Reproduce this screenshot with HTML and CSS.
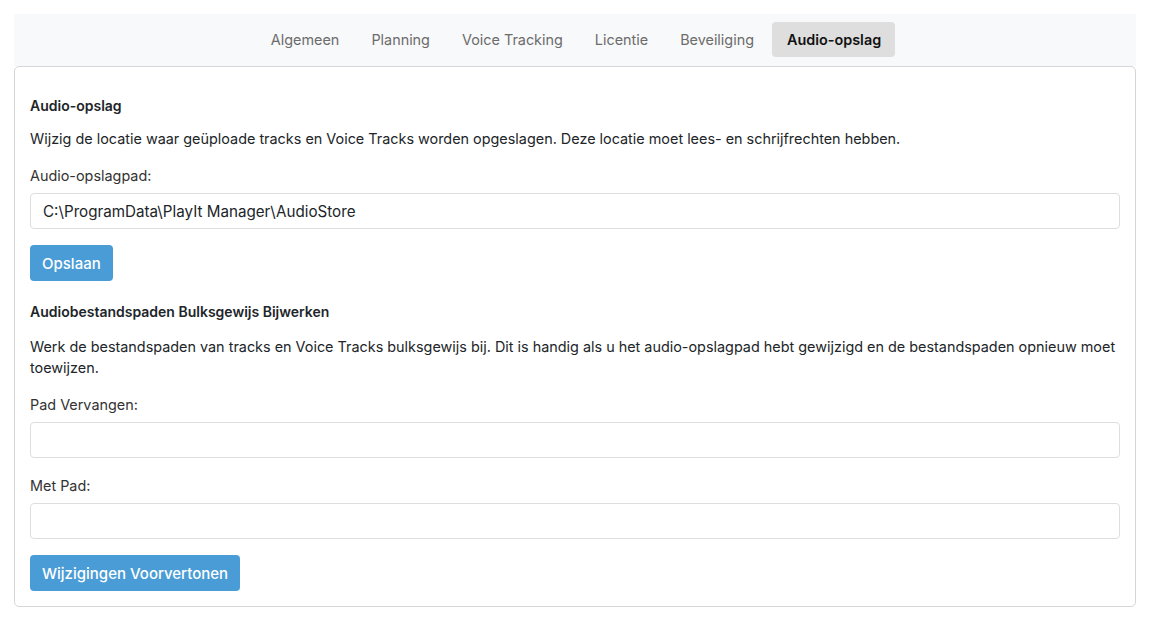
FILE: index.html
```html
<!DOCTYPE html>
<html lang="nl">

<head>
    <meta charset="UTF-8">
    <meta name="viewport" content="width=device-width, initial-scale=1.0">
    <title>Instellingen - Audio-opslag</title>
    <link rel="stylesheet" href="styles.css">
</head>

<body>
    <div class="settings">
        <nav class="tabs">
            <a class="tab" href="#">Algemeen</a>
            <a class="tab" href="#">Planning</a>
            <a class="tab" href="#">Voice Tracking</a>
            <a class="tab" href="#">Licentie</a>
            <a class="tab" href="#">Beveiliging</a>
            <a class="tab active" href="#">Audio-opslag</a>
        </nav>

        <div class="panel">
            <h3 class="first">Audio-opslag</h3>
            <p>Wijzig de locatie waar geüploade tracks en Voice Tracks worden opgeslagen. Deze locatie moet lees- en schrijfrechten hebben.</p>
            <label for="store-path">Audio-opslagpad:</label>
            <input type="text" id="store-path" value="C:\ProgramData\PlayIt Manager\AudioStore">
            <button class="btn">Opslaan</button>

            <h3>Audiobestandspaden Bulksgewijs Bijwerken</h3>
            <p>Werk de bestandspaden van tracks en Voice Tracks bulksgewijs bij. Dit is handig als u het audio-opslagpad hebt gewijzigd en de bestandspaden opnieuw moet toewijzen.</p>
            <label for="replace-path">Pad Vervangen:</label>
            <input type="text" id="replace-path">
            <label for="with-path">Met Pad:</label>
            <input type="text" id="with-path">
            <button class="btn">Wijzigingen Voorvertonen</button>
        </div>
    </div>
</body>

</html>
```

FILE: styles.css
```css
body {
    font-family: Inter, 'Noto Sans', sans-serif;
    font-size: 14.4px;
    margin: 0;
    padding: 14px;
    background: #fff;
    color: #212529;
}

.tabs {
    display: flex;
    justify-content: center;
    background-color: #f8f9fa;
    padding: 8px 0 9px;
}

.tab {
    padding: 9px 16px;
    font-size: 14.4px;
    line-height: 17px;
    color: #6c6c6c;
    text-decoration: none;
    border-radius: 4px;
}

.tab.active {
    background-color: #dedede;
    color: #111;
    font-weight: 600;
    margin-left: 2px;
    padding: 9px 14px 9px 15px;
}

.panel {
    border: 1px solid #d6d6d6;
    border-radius: 5px;
    padding: 23px 15px 15px;
}

.panel h3 {
    font-size: 14px;
    font-weight: 600;
    margin: 21px 0 14px;
    line-height: 20px;
}

.panel h3.first {
    margin: 6px 0 12px;
}

.panel p {
    margin: 0 0 17px;
    line-height: 21px;
}

.panel label {
    display: block;
    line-height: 20px;
    margin-bottom: 7px;
    color: #333;
}

.panel input {
    display: block;
    box-sizing: border-box;
    width: 100%;
    height: 36px;
    padding: 6px 12px;
    margin-bottom: 18px;
    border: 1px solid #dedede;
    border-radius: 4px;
    font-family: inherit;
    font-size: 15.2px;
    color: #212529;
}

.btn {
    display: block;
    height: 36px;
    padding: 0 12px;
    margin: -2px 0 16px;
    border: none;
    border-radius: 4px;
    background-color: #4a9cd6;
    color: #fff;
    font-family: inherit;
    font-size: 15px;
    font-weight: 500;
    cursor: pointer;
}

.btn:last-child {
    margin-bottom: 0;
}
```
